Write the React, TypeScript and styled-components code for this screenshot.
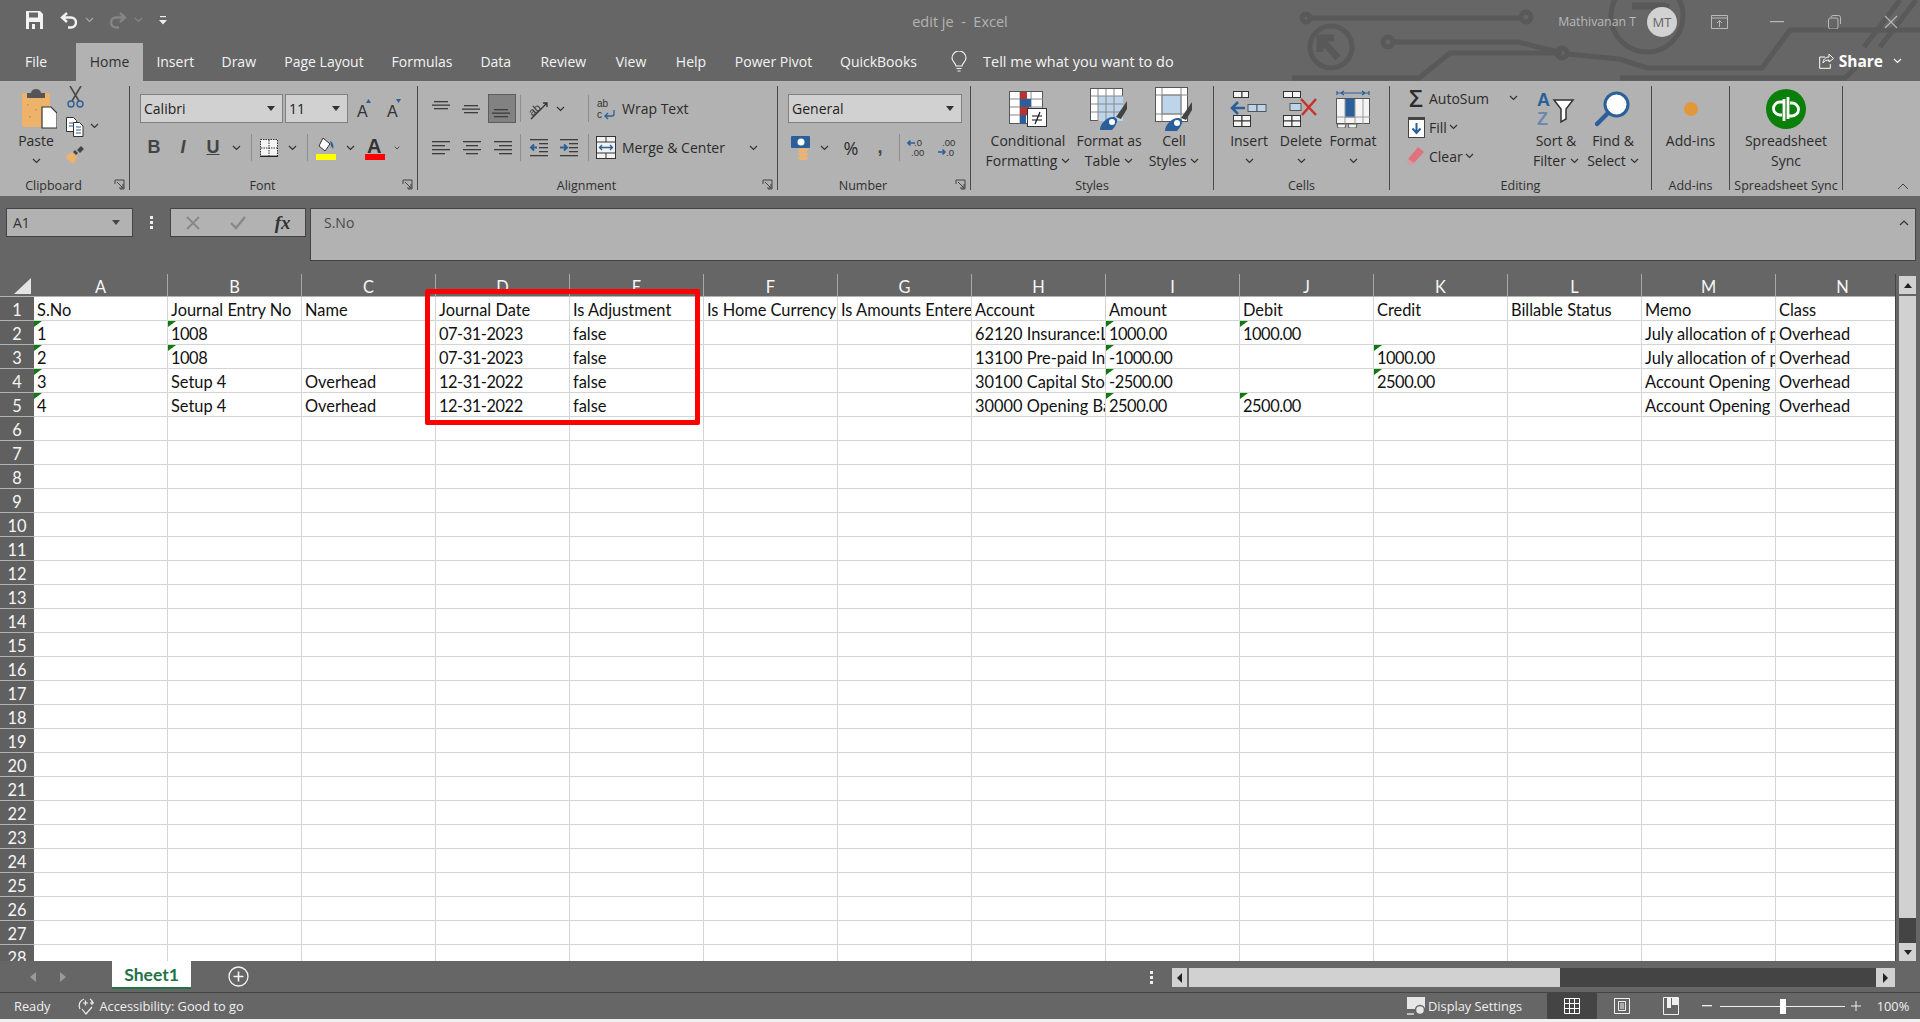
import React from "react";
import styled, { createGlobalStyle } from "styled-components";

const UI_FONT = `"Open Sans", "Noto Sans", sans-serif`;
const CELL_FONT = `Lato, "Open Sans", sans-serif`;
const BLUE = "#2b5f99";
const INK = "#2b2b2b";

const Global = createGlobalStyle`
	html, body { margin: 0; padding: 0; background: #666; }
	* { box-sizing: border-box; }
`;

const Window = styled.div`
	width: 1920px;
	height: 1022px;
	display: flex;
	flex-direction: column;
	background: #666;
	font-family: ${UI_FONT};
	overflow: hidden;
`;

const Header = styled.div`
	position: relative;
	height: 81px;
	flex: none;
`;

const Circuit = styled.svg`
	position: absolute;
	top: 0;
	right: 0;
`;

const TitleBar = styled.div`
	position: relative;
	height: 43px;
	display: grid;
	grid-template-columns: 1fr auto 1fr;
	align-items: center;
`;

const Qat = styled.div`
	display: flex;
	align-items: center;
	padding-left: 26px;
	padding-bottom: 3px;
`;

const QatItem = styled.div<{ $ml: number }>`
	display: flex;
	align-items: center;
	margin-left: ${(p) => p.$ml}px;
`;

const Title = styled.div`
	font-size: 14.5px;
	color: #b4b4b4;
	white-space: pre;
`;

const WindowRight = styled.div`
	display: flex;
	align-items: center;
	justify-content: flex-end;
	height: 100%;
`;

const UserName = styled.span`
	font-size: 12.3px;
	color: #b9b9b9;
	margin-right: 11px;
`;

const Avatar = styled.div`
	width: 30px;
	height: 30px;
	border-radius: 50%;
	background: #d2d2d2;
	color: #666;
	font-size: 13px;
	display: flex;
	align-items: center;
	justify-content: center;
	margin-right: 13px;
`;

const WinButton = styled.div<{ $w: number }>`
	width: ${(p) => p.$w}px;
	display: flex;
	justify-content: center;
`;

const TabBar = styled.div`
	position: relative;
	height: 38px;
	display: flex;
	align-items: stretch;
	padding-left: 4px;
`;

const Tab = styled.div<{ $w: number; $mr?: number; $active?: boolean }>`
	width: ${(p) => p.$w}px;
	margin-right: ${(p) => p.$mr ?? 0}px;
	display: flex;
	align-items: center;
	justify-content: center;
	padding-bottom: 2px;
	font-size: 14px;
	white-space: nowrap;
	color: ${(p) => (p.$active ? "#303030" : "#f4f4f4")};
	background: ${(p) => (p.$active ? "#b2b2b2" : "transparent")};
`;

const TellMe = styled.div`
	display: flex;
	align-items: center;
	gap: 16px;
	margin-left: 20px;
	padding-bottom: 2px;
	font-size: 14.5px;
	color: #f4f4f4;
`;

const Share = styled.div`
	position: absolute;
	right: 14px;
	top: 0;
	height: 100%;
	display: flex;
	align-items: center;
	gap: 5px;
	padding-bottom: 2px;
	font-size: 15.5px;
	font-weight: 700;
	color: #fff;
`;

const Ribbon = styled.div`
	position: relative;
	height: 115px;
	flex: none;
	background: #b2b2b2;
	display: flex;
	padding-top: 5px;
	color: ${INK};
`;

const Collapse = styled.svg`
	position: absolute;
	right: 11px;
	bottom: 6px;
`;

const GroupBox = styled.div<{ $w: number; $bare?: boolean }>`
	position: relative;
	width: ${(p) => p.$w}px;
	height: 104px;
	flex: none;
	display: flex;
	flex-direction: column;
	border-right: ${(p) => (p.$bare ? "none" : "1px solid #4a4a4a")};
`;

const GroupBody = styled.div<{ $pl?: number; $gap?: number; $center?: boolean }>`
	height: 90px;
	flex: none;
	display: flex;
	padding-left: ${(p) => p.$pl ?? 0}px;
	gap: ${(p) => p.$gap ?? 0}px;
	justify-content: ${(p) => (p.$center ? "center" : "flex-start")};
`;

const GroupLabel = styled.div<{ $launcher?: boolean }>`
	height: 18px;
	flex: none;
	margin-top: 1px;
	line-height: 18px;
	padding-right: ${(p) => (p.$launcher ? 22 : 0)}px;
	text-align: center;
	font-size: 12.5px;
	white-space: nowrap;
	color: #2f2f2f;
`;

const Launcher = styled.svg`
	position: absolute;
	right: 4px;
	bottom: 0;
`;

const Stack = styled.div`
	display: flex;
	flex-direction: column;
	gap: 10px;
	padding-top: 8px;
`;

const ToolRow = styled.div`
	display: flex;
	align-items: center;
	height: 29px;
`;

const Tool = styled.div<{ $w: number; $h?: number; $ml?: number; $on?: boolean }>`
	width: ${(p) => p.$w}px;
	height: ${(p) => p.$h ?? 29}px;
	margin-left: ${(p) => p.$ml ?? 0}px;
	flex: none;
	display: flex;
	align-items: center;
	justify-content: center;
	background: ${(p) => (p.$on ? "#828282" : "transparent")};
	border: ${(p) => (p.$on ? "1px solid #5c5c5c" : "none")};
`;

const Separator = styled.div<{ $ml: number }>`
	width: 1px;
	height: 27px;
	flex: none;
	margin-left: ${(p) => p.$ml}px;
	background: #8c8c8c;
`;

const Combo = styled.div<{ $w: number; $ml?: number }>`
	width: ${(p) => p.$w}px;
	height: 29px;
	flex: none;
	margin-left: ${(p) => p.$ml ?? 0}px;
	display: flex;
	align-items: center;
	justify-content: space-between;
	padding: 0 7px 0 3px;
	background: #d1d1d1;
	border: 1px solid #808080;
	font-size: 14px;
	color: #222;
`;

const ToolText = styled.span<{ $size?: number; $weight?: number }>`
	font-size: ${(p) => p.$size ?? 14}px;
	font-weight: ${(p) => p.$weight ?? 400};
	line-height: 20px;
	white-space: nowrap;
`;

const BoldLetter = styled.span`
	font-family: "Liberation Sans", sans-serif;
	font-weight: 700;
	font-size: 18px;
	color: #444;
`;

const ItalicLetter = styled(BoldLetter)`
	font-style: italic;
`;

const UnderLetter = styled(BoldLetter)`
	text-decoration: underline;
`;

const LargeBox = styled.div<{ $w: number }>`
	width: ${(p) => p.$w}px;
	flex: none;
	display: flex;
	flex-direction: column;
	align-items: center;
	font-size: 14px;
	line-height: 20px;
	white-space: nowrap;
`;

const LargeIcon = styled.div`
	height: 45px;
	display: flex;
	align-items: center;
	justify-content: center;
`;

const LargeLine = styled.div`
	display: flex;
	align-items: center;
	gap: 4px;
	height: 20px;
`;

const IconColumn = styled.div<{ $ml: number }>`
	display: flex;
	flex-direction: column;
	align-items: center;
	gap: 9px;
	margin-left: ${(p) => p.$ml}px;
`;

const EditColumn = styled.div`
	width: 125px;
	flex: none;
	display: flex;
	flex-direction: column;
	gap: 3px;
	margin-top: -1px;
`;

const EditRow = styled.div`
	height: 26px;
	display: flex;
	align-items: center;
	font-size: 14px;
`;

const EditIcon = styled.div`
	width: 26px;
	flex: none;
	display: flex;
	justify-content: center;
`;

const FormulaRow = styled.div`
	height: 78px;
	flex: none;
	display: flex;
	align-items: flex-start;
	padding: 12px 4px 0 6px;
`;

const NameBox = styled.div`
	width: 127px;
	height: 29px;
	display: flex;
	align-items: center;
	justify-content: space-between;
	padding: 0 12px 0 6px;
	background: #b2b2b2;
	border: 1px solid #444;
	font-size: 14px;
	color: #333;
`;

const Dots = styled.div`
	width: 37px;
	height: 29px;
	display: flex;
	align-items: center;
	justify-content: center;
`;

const FxBox = styled.div`
	width: 136px;
	height: 29px;
	display: grid;
	grid-template-columns: repeat(3, 1fr);
	justify-items: center;
	align-items: center;
	background: #b2b2b2;
	border: 1px solid #444;
`;

const FxText = styled.span`
	font-family: "Liberation Serif", serif;
	font-style: italic;
	font-weight: 700;
	font-size: 19px;
	color: #333;
`;

const FormulaBar = styled.div`
	position: relative;
	flex: 1;
	height: 53px;
	margin-left: 4px;
	padding: 4px 13px;
	background: #b2b2b2;
	border: 1px solid #444;
	font-size: 14px;
	color: #4a4a4a;
`;

const FormulaCaret = styled.svg`
	position: absolute;
	right: 6px;
	top: 11px;
`;

const GridArea = styled.div`
	position: relative;
	height: 687px;
	flex: none;
	display: flex;
`;

const Sheet = styled.div`
	width: 1896px;
	height: 687px;
	overflow: hidden;
	display: grid;
	grid-template-columns: 34px repeat(14, 134px);
	grid-template-rows: 23px;
	grid-auto-rows: 24px;
	background: #fff;
	border-right: 1px solid #444;
	font-family: ${CELL_FONT};
	font-size: 16.4px;
	align-content: start;
`;

const Corner = styled.div`
	background: #666;
	border-bottom: 1px solid #b2b2b2;
	display: flex;
	align-items: flex-end;
	justify-content: flex-end;
	padding: 0 3px 2px 0;
`;

const ColHead = styled.div`
	background: #666;
	color: #f6f6f6;
	border-right: 1px solid #a8a8a8;
	border-bottom: 1px solid #b2b2b2;
	display: flex;
	align-items: center;
	justify-content: center;
	padding-top: 2px;
`;

const RowHead = styled.div`
	background: #606060;
	color: #f6f6f6;
	border-bottom: 1px solid #b2b2b2;
	display: flex;
	align-items: center;
	justify-content: center;
	padding-top: 1px;
`;

const Cell = styled.div<{ $flag?: boolean; $num?: boolean }>`
	position: relative;
	border-right: 1px solid #d4d4d4;
	border-bottom: 1px solid #d4d4d4;
	padding: 1px 3px 0;
	line-height: 23px;
	letter-spacing: ${(p) => (p.$num ? "-0.45px" : "0")};
	white-space: nowrap;
	overflow: hidden;
	color: #111;

	&::before {
		content: "";
		display: ${(p) => (p.$flag ? "block" : "none")};
		position: absolute;
		left: 0;
		top: 0;
		border-top: 6px solid #0f7b0f;
		border-right: 8px solid transparent;
	}
`;

const Highlight = styled.div`
	position: absolute;
	left: 425px;
	top: 15px;
	width: 275px;
	height: 136px;
	border: 5px solid #f00;
	border-radius: 2px;
	pointer-events: none;
`;

const ScrollColumn = styled.div`
	width: 24px;
	display: flex;
	flex-direction: column;
	padding: 2px 4px 0 3px;
`;

const ScrollButton = styled.div`
	height: 18px;
	flex: none;
	background: #d1d1d1;
	display: flex;
	align-items: center;
	justify-content: center;
`;

const ScrollThumb = styled.div`
	height: 622px;
	flex: none;
	margin-top: 2px;
	background: #d1d1d1;
`;

const ScrollTrack = styled.div`
	flex: 1;
	background: #444;
`;

const SheetBar = styled.div`
	height: 32px;
	flex: none;
	display: flex;
	align-items: flex-start;
	border-bottom: 1px solid #444;
`;

const SheetNav = styled.div`
	width: 112px;
	height: 100%;
	display: flex;
	align-items: center;
	gap: 24px;
	padding: 0 0 0 30px;
`;

const SheetTab = styled.div`
	width: 79px;
	height: 28px;
	padding-top: 1px;
	background: #fff;
	border-bottom: 2px solid #217346;
	color: #217346;
	font-family: ${CELL_FONT};
	font-weight: 700;
	font-size: 17.5px;
	display: flex;
	align-items: center;
	justify-content: center;
`;

const AddSheet = styled.div`
	margin-left: 37px;
	height: 100%;
	display: flex;
	align-items: center;
`;

const HScroll = styled.div`
	margin-left: auto;
	margin-right: 25px;
	margin-top: 7px;
	height: 19px;
	display: flex;
	align-items: stretch;
`;

const HDots = styled.div`
	display: flex;
	align-items: center;
	margin-right: 19px;
`;

const HButton = styled.div<{ $w: number }>`
	width: ${(p) => p.$w}px;
	background: #d1d1d1;
	display: flex;
	align-items: center;
	justify-content: center;
`;

const HThumb = styled.div`
	width: 371px;
	margin-left: 2px;
	background: #d1d1d1;
`;

const HTrack = styled.div`
	width: 316px;
	background: #444;
`;

const StatusBar = styled.div`
	height: 26px;
	flex: none;
	display: flex;
	align-items: stretch;
	padding-left: 14px;
	font-size: 12.8px;
	color: #efefef;
`;

const StatusItem = styled.div<{ $ml?: number; $mr?: number }>`
	display: flex;
	align-items: center;
	gap: 2px;
	margin-left: ${(p) => p.$ml ?? 0}px;
	margin-right: ${(p) => p.$mr ?? 0}px;
`;

const StatusRight = styled.div`
	margin-left: auto;
	display: flex;
	align-items: stretch;
`;

const ViewButton = styled.div<{ $on?: boolean; $w: number }>`
	width: ${(p) => p.$w}px;
	display: flex;
	align-items: center;
	justify-content: center;
	background: ${(p) => (p.$on ? "#444" : "transparent")};
`;

const ZoomTrack = styled.div`
	position: relative;
	width: 125px;
	margin: 0 1px;
	align-self: center;
	height: 1px;
	background: #f0f0f0;

	&::after {
		content: "";
		position: absolute;
		left: 60px;
		top: -7px;
		width: 6px;
		height: 15px;
		background: #fff;
	}
`;

const ZoomPct = styled.div`
	width: 54px;
	display: flex;
	align-items: center;
	justify-content: center;
`;

const BottomStrip = styled.div`
	flex: 1;
	background: #f1f1f1;
`;

const Chevron = ({ color = "#333" }: { color?: string }) => (
	<svg width="9" height="6" viewBox="0 0 9 6">
		<polyline points="1,1 4.5,4.5 8,1" fill="none" stroke={color} strokeWidth="1.2" />
	</svg>
);

const Triangle = ({ color = "#333", up }: { color?: string; up?: boolean }) => (
	<svg width="8" height="5" viewBox="0 0 8 5">
		<polygon points={up ? "0,5 8,5 4,0" : "0,0 8,0 4,5"} fill={color} />
	</svg>
);

const LauncherIcon = () => (
	<Launcher width="11" height="11" viewBox="0 0 11 11">
		<path d="M1 5V1h9v9H6M3 3l6 6M9 5v4H5" fill="none" stroke="#444" strokeWidth="1" />
	</Launcher>
);

const TextLines = ({ rows }: { rows: [number, number][] }) => (
	<svg width="20" height="18" viewBox="0 0 20 18">
		{rows.map(([x, width], i) => (
			<rect key={i} x={x} y={2 + i * 4} width={width} height="1.3" fill="#3c3c3c" />
		))}
	</svg>
);

const VerticalAlign = ({ top }: { top: number }) => (
	<svg width="20" height="18" viewBox="0 0 20 18">
		{[0, 1, 2].map((i) => (
			<rect key={i} x={i === 1 ? 0 : 2} y={top + i * 3.5} width={i === 1 ? 18 : 14} height="1.3" fill="#3c3c3c" />
		))}
	</svg>
);

const SaveIcon = () => (
	<svg width="17" height="18" viewBox="0 0 17 18">
		<path d="M0 0h14l3 3v15H0z" fill="#f2f2f2" />
		<rect x="3" y="1.5" width="9" height="5" fill="#666" />
		<rect x="3" y="11" width="11" height="7" fill="#666" />
		<rect x="6" y="13" width="3" height="5" fill="#f2f2f2" />
	</svg>
);

const UndoIcon = ({ color, flip }: { color: string; flip?: boolean }) => (
	<svg width="19" height="17" viewBox="0 0 19 17">
		<path
			d="M7 1L2 5.5 7 10M2 5.5h9a5 5 0 0 1 0 10H8"
			transform={flip ? "matrix(-1 0 0 1 19 0)" : undefined}
			fill="none"
			stroke={color}
			strokeWidth="2.4"
		/>
	</svg>
);

const CustomizeIcon = () => (
	<svg width="8" height="9" viewBox="0 0 8 9">
		<rect x="1" y="0" width="6" height="1.2" fill="#eee" />
		<polygon points="0,4 8,4 4,8.5" fill="#eee" />
	</svg>
);

const CircuitArt = () => (
	<Circuit width="640" height="81" viewBox="0 0 640 81">
		<g fill="none" stroke="#595959" strokeWidth="5">
			<circle cx="26" cy="18" r="4" />
			<path d="M31 18H240" />
			<circle cx="246" cy="17" r="5" />
			<circle cx="51" cy="47" r="21" />
			<path d="M58 58L42 40M40 52V38h14" strokeWidth="7" />
			<circle cx="108" cy="42" r="5" />
			<path d="M113 42H238l44 11" />
			<circle cx="282" cy="53" r="5" />
			<path d="M12 78H139l31-25H277M287 54l52 5 28 9H482l28-38H640" />
			<circle cx="367" cy="16" r="36" />
			<path d="M352 6h34v-2M386 6l-14 24" strokeWidth="7" />
			<path d="M340 78H565l12-12M584 47L620 0M600 47L636 0" />
		</g>
	</Circuit>
);

const PasteIcon = () => (
	<svg width="42" height="40" viewBox="-7 0 42 40">
		<rect x="0" y="4" width="28" height="34" rx="2" fill="#eeb36a" />
		<path d="M9 4a5 4 0 0 1 10 0h4v5H5V4z" fill="#555" />
		<path d="M20 18h9l6 6v15H20z" fill="#fff" stroke="#333" strokeWidth="1.200" />
		<g fill="#c98d44">
			<rect x="5" y="15" width="1.500" height="1.500" />
			<rect x="13" y="20" width="1.500" height="1.500" />
			<rect x="7" y="27" width="1.500" height="1.500" />
		</g>
	</svg>
);

const CutIcon = () => (
	<svg width="17" height="22" viewBox="0 0 17 22">
		<path d="M3 0l9 15M14 0L5 15" stroke="#4a4a4a" strokeWidth="1.6" fill="none" />
		<circle cx="4" cy="18" r="3" fill="none" stroke={BLUE} strokeWidth="1.4" />
		<circle cx="13" cy="18" r="3" fill="none" stroke={BLUE} strokeWidth="1.4" />
	</svg>
);

const CopyIcon = () => (
	<svg width="18" height="20" viewBox="0 0 18 20">
		<path d="M.5.5h7l3 3v11H.5z" fill="#fff" stroke="#333" />
		<path d="M7.5 5.5h6l3.5 3.5v10.500H7.500z" fill="#fff" stroke="#333" />
		<path d="M3 6h5M3 9h4M10 10h5M10 13h5M10 16h5" stroke={BLUE} strokeWidth="1.200" />
	</svg>
);

const PainterIcon = () => (
	<svg width="18" height="18" viewBox="0 0 18 18">
		<path d="M0 10l6-4 5 5-3 7-4-2-1-3-2 1z" fill="#eeb36a" />
		<path d="M7 6l2-2 3 3-2 2zM11 4l4-4 3 3-4 4z" fill="#444" />
	</svg>
);

const GrowIcon = ({ up }: { up: boolean }) => (
	<svg width="18" height="20" viewBox="0 0 18 20">
		<text x="1" y="18" fontFamily="Liberation Sans" fontSize="16" fill="#333">A</text>
		<polygon points={up ? "10,4 15,4 12.500,0" : "10,0 15,0 12.500,4"} fill={BLUE} />
	</svg>
);

const BordersIcon = () => (
	<svg width="18" height="18" viewBox="0 0 18 18">
		<rect x=".5" y=".5" width="17" height="17" fill="#f4f4f4" stroke="#333" strokeDasharray="1.500 1" />
		<path d="M9 1v16M1 9h16" stroke="#333" strokeDasharray="1.500 1" />
		<path d="M0 17.300h18" stroke="#222" strokeWidth="1.400" />
	</svg>
);

const FillIcon = () => (
	<svg width="21" height="24" viewBox="0 0 21 24">
		<path d="M7 2l7 6-5 7-6-5z" fill="#fff" stroke="#333" />
		<path d="M14 5c3 1 4 5 3 8l-2-3z" fill={BLUE} />
		<rect x="0" y="18" width="20" height="6" fill="#ffff00" />
	</svg>
);

const FontColorIcon = () => (
	<svg width="21" height="24" viewBox="0 0 21 24">
		<text x="2" y="17" fontFamily="Liberation Sans" fontWeight="700" fontSize="20" fill="#333">A</text>
		<rect x="0" y="18" width="20" height="6" fill="#f00" />
	</svg>
);

const OrientIcon = () => (
	<svg width="22" height="22" viewBox="0 0 22 22">
		<text x="1" y="15" fontFamily="Liberation Sans" fontSize="11" fill="#333" transform="rotate(-40 8 11)">ab</text>
		<path d="M4 21L20 5M16 5h4v4" fill="none" stroke="#333" strokeWidth="1.300" />
	</svg>
);

const WrapIcon = () => (
	<svg width="20" height="22" viewBox="0 0 20 22">
		<text x="1" y="9" fontFamily="Liberation Sans" fontSize="10" fill="#333">ab</text>
		<text x="1" y="20" fontFamily="Liberation Sans" fontSize="10" fill="#333">c</text>
		<path d="M18 12v4a2 2 0 0 1-2 2H9M12 15l-3 3 3 3" fill="none" stroke={BLUE} strokeWidth="1.300" />
	</svg>
);

const MergeIcon = () => (
	<svg width="20" height="23" viewBox="0 0 20 23">
		<rect x=".5" y=".5" width="19" height="22" fill="#f2f2f2" stroke="#333" />
		<path d="M1 6h18M1 17h18M10 1v5M10 17v5" stroke="#333" />
		<path d="M4 11.500h12M6 9l-2.500 2.500L6 14M14 9l2.500 2.500L14 14" fill="none" stroke={BLUE} strokeWidth="1.300" />
	</svg>
);

const IndentIcon = ({ right }: { right: boolean }) => (
	<svg width="20" height="20" viewBox="0 0 20 20">
		{[1, 5, 9, 13, 17].map((y, i) => (
			<rect key={y} x={i === 0 || i === 4 ? 1 : 10} y={y} width={i === 0 || i === 4 ? 18 : 9} height="1.300" fill="#3c3c3c" />
		))}
		<path d={right ? "M1 9.500h6M5 6.500l3 3-3 3" : "M8 9.500H2M5 6.500l-3 3 3 3"} fill="none" stroke={BLUE} strokeWidth="2" />
	</svg>
);

const AccountingIcon = () => (
	<svg width="20" height="24" viewBox="0 0 20 24">
		<rect x="0" y="0" width="19" height="12" rx="1" fill={BLUE} />
		<circle cx="10" cy="6" r="3.500" fill="#fff" />
		<ellipse cx="12" cy="14" rx="5" ry="2" fill="#e9b474" />
		<ellipse cx="12" cy="18" rx="5" ry="2" fill="#e9b474" />
		<ellipse cx="12" cy="22" rx="5" ry="2" fill="#e9b474" />
	</svg>
);

const DecimalIcon = ({ more }: { more: boolean }) => (
	<svg width="20" height="20" viewBox="0 0 20 20" fontFamily="Liberation Sans" fontSize="9.500" fill="#333">
		<text x={more ? 7 : 4} y="8">{more ? ".0" : ".00"}</text>
		<text x={more ? 4 : 8} y="18">{more ? ".00" : ".0"}</text>
		<path d={more ? "M8 5H1M3.500 2.500L1 5l2.500 2.500" : "M0 14h7M4.500 11.500L7 14l-2.500 2.500"} fill="none" stroke={BLUE} strokeWidth="1.600" />
	</svg>
);

const CondFormatIcon = () => (
	<svg width="38" height="36" viewBox="0 0 38 36">
		<rect x=".5" y=".5" width="33" height="32" fill="#fff" stroke="#555" />
		<path d="M11 1v32M22 1v32M1 8h33M1 16h33M1 24h33" stroke="#888" />
		<rect x="11" y="1" width="7" height="7" fill="#b8352f" />
		<rect x="11" y="8" width="11" height="8" fill={BLUE} />
		<rect x="11" y="16" width="9" height="8" fill="#b8352f" />
		<rect x="11" y="24" width="6" height="9" fill={BLUE} />
		<rect x="18.500" y="17.500" width="19" height="18" fill="#fff" stroke="#333" />
		<path d="M23 25h10M23 29h10M31 21l-5 12" stroke="#111" strokeWidth="1.200" />
	</svg>
);

const TableStyleIcon = () => (
	<svg width="38" height="42" viewBox="0 0 38 42">
		<rect x=".5" y=".5" width="32" height="32" fill="#fff" stroke="#555" />
		<rect x="8" y="8" width="25" height="25" fill="#bcd5ea" />
		<path d="M8 1v32M16 1v32M24 1v32M1 8h32M1 16h32M1 24h32" stroke="#888" />
		<path d="M26 29L37 13v8l-6 10z" fill="#444" />
		<path d="M10 42c0-6 6-12 12-13 4 0 6 2 5 5-1 2-2 5-5 8z" fill={BLUE} />
		<circle cx="22" cy="34" r="3" fill="#fff" />
	</svg>
);

const CellStyleIcon = () => (
	<svg width="38" height="44" viewBox="0 0 38 44">
		<rect x=".5" y=".5" width="32" height="34" fill="#fff" stroke="#555" />
		<rect x="7" y="8" width="19" height="19" fill="#bcd5ea" stroke="#888" />
		<path d="M7 1v33M26 1v33M1 8h32M1 27h32" stroke="#888" />
		<path d="M26 31L37 15v8l-6 10z" fill="#444" />
		<path d="M10 44c0-6 6-12 12-13 4 0 6 2 5 5-1 2-2 5-5 8z" fill={BLUE} />
		<circle cx="22" cy="36" r="3" fill="#fff" />
	</svg>
);

const CellBlock = ({ x, y }: { x: number; y: number }) => (
	<g fill="#f4f4f4" stroke="#333">
		<rect x={x} y={y} width="8.500" height="5.500" />
		<rect x={x + 8.500} y={y} width="8.500" height="5.500" />
		<rect x={x} y={y + 5.500} width="8.500" height="5.500" />
		<rect x={x + 8.500} y={y + 5.500} width="8.500" height="5.500" />
	</g>
);

const InsertCellsIcon = () => (
	<svg width="38" height="36" viewBox="0 0 38 36">
		<rect x="3.500" y=".5" width="8.500" height="6" fill="#f4f4f4" stroke="#333" />
		<rect x="12" y=".5" width="6.500" height="6" fill="#f4f4f4" stroke="#333" />
		<rect x="18" y="13.500" width="9" height="7" fill="#bcd5ea" stroke="#555" />
		<rect x="27" y="13.500" width="9" height="7" fill="#bcd5ea" stroke="#555" />
		<path d="M15 17H3M8 11l-6 6 6 6" fill="none" stroke={BLUE} strokeWidth="2.500" />
		<CellBlock x={3.500} y={24.500} />
	</svg>
);

const DeleteCellsIcon = () => (
	<svg width="36" height="36" viewBox="0 0 36 36">
		<rect x=".5" y=".5" width="9" height="6" fill="#f4f4f4" stroke="#333" />
		<rect x="9.500" y=".5" width="8" height="6" fill="#f4f4f4" stroke="#333" />
		<rect x="7" y="12.500" width="11" height="7" fill="#bcd5ea" stroke="#555" />
		<CellBlock x={.5} y={24.500} />
		<path d="M18 8l15 16M33 8L19 24" stroke="#c8322a" strokeWidth="2.500" />
	</svg>
);

const FormatCellsIcon = () => (
	<svg width="34" height="38" viewBox="0 0 34 38">
		<path d="M1 3h32M1 1v4M33 1v4M5 3l3-2M5 3l3 2M29 3l-3-2M29 3l-3 2" fill="none" stroke={BLUE} strokeWidth="1.200" />
		<rect x=".5" y="8.500" width="33" height="25" fill="#f4f4f4" stroke="#555" />
		<rect x="9" y="8.500" width="10" height="19" fill={BLUE} />
		<path d="M9 9v25M19 9v25M27 9v25M1 27h33" stroke="#999" />
		<path d="M1 34h9l-1 4H2zM12 34h9l-1 4h-7z" fill="#f4f4f4" stroke="#555" />
	</svg>
);

const FillDownIcon = () => (
	<svg width="17" height="21" viewBox="0 0 17 21">
		<rect x=".5" y=".5" width="16" height="20" fill="#fff" stroke="#444" />
		<rect x="0" y="0" width="17" height="3" fill="#444" />
		<path d="M8.500 6v10M4.500 11.500l4 4.500 4-4.500" fill="none" stroke={BLUE} strokeWidth="2" />
	</svg>
);

const EraserIcon = () => (
	<svg width="18" height="18" viewBox="0 0 18 18">
		<path d="M11 0l6 5L7 16 1 12z" fill="#e0727f" />
		<path d="M1 12l6 4-1.500 2H2l-2-3z" fill="#d79aa2" />
	</svg>
);

const SortFilterIcon = () => (
	<svg width="38" height="36" viewBox="0 0 38 36" fontFamily="Liberation Sans" fontWeight="700" fontSize="18" fill={BLUE}>
		<text x="0" y="15">A</text>
		<text x="0" y="34" fill="#6d87ad">Z</text>
		<path d="M17 9h19l-7 9v10l-5 3V18z" fill="#fff" stroke="#333" strokeWidth="1.500" />
	</svg>
);

const FindIcon = () => (
	<svg width="36" height="36" viewBox="0 0 36 36">
		<circle cx="21.500" cy="13.500" r="11.500" fill="#fff" stroke={BLUE} strokeWidth="3" />
		<path d="M13 22L2 33" stroke={BLUE} strokeWidth="4.500" strokeLinecap="round" />
	</svg>
);

const QuickBooksLogo = () => (
	<svg width="40" height="40" viewBox="0 0 40 40">
		<circle cx="20" cy="20" r="20" fill="#0a7f0a" />
		<path d="M18 13h-4a6.500 6.500 0 0 0 0 13h2M18 10v22M22 27h4a6.500 6.500 0 0 0 0-13h-2M22 30V8" fill="none" stroke="#fff" strokeWidth="2.800" />
	</svg>
);

const Large = ({ w, icon, lines, chevron }: { w: number; icon: React.ReactNode; lines: string[]; chevron?: "below" | "inline" }) => (
	<LargeBox $w={w}>
		<LargeIcon>{icon}</LargeIcon>
		{lines.map((line, i) => (
			<LargeLine key={i}>
				{line}
				{chevron === "inline" && i === lines.length - 1 && <Chevron />}
			</LargeLine>
		))}
		{chevron === "below" && (
			<LargeLine>
				<Chevron />
			</LargeLine>
		)}
	</LargeBox>
);

const Group = ({ w, label, launcher, bare, children, pl, gap, center }: {
	w: number;
	label: string;
	launcher?: boolean;
	bare?: boolean;
	children: React.ReactNode;
	pl?: number;
	gap?: number;
	center?: boolean;
}) => (
	<GroupBox $w={w} $bare={bare}>
		<GroupBody $pl={pl} $gap={gap} $center={center}>
			{children}
		</GroupBody>
		<GroupLabel $launcher={launcher}>{label}</GroupLabel>
		{launcher && <LauncherIcon />}
	</GroupBox>
);

const COLUMNS = "ABCDEFGHIJKLMN".split("");

// text plus the "number stored as text" flag for each cell that has one
type Entry = string | [string];
const ROWS: Record<number, Partial<Record<string, Entry>>> = {
	1: { A: "S.No", B: "Journal Entry No", C: "Name", D: "Journal Date", E: "Is Adjustment", F: "Is Home Currency", G: "Is Amounts Entere", H: "Account", I: "Amount", J: "Debit", K: "Credit", L: "Billable Status", M: "Memo", N: "Class" },
	2: { A: ["1"], B: ["1008"], D: "07-31-2023", E: "false", H: "62120 Insurance:L", I: ["1000.00"], J: ["1000.00"], M: "July allocation of p", N: "Overhead" },
	3: { A: ["2"], B: ["1008"], D: "07-31-2023", E: "false", H: "13100 Pre-paid Ins", I: ["-1000.00"], K: ["1000.00"], M: "July allocation of p", N: "Overhead" },
	4: { A: ["3"], B: "Setup 4", C: "Overhead", D: "12-31-2022", E: "false", H: "30100 Capital Stoc", I: ["-2500.00"], K: ["2500.00"], M: "Account Opening B", N: "Overhead" },
	5: { A: ["4"], B: "Setup 4", C: "Overhead", D: "12-31-2022", E: "false", H: "30000 Opening Ba", I: ["2500.00"], J: ["2500.00"], M: "Account Opening B", N: "Overhead" },
};

const renderRow = (row: number) => (
	<React.Fragment key={row}>
		<RowHead>{row}</RowHead>
		{COLUMNS.map((col) => {
			const entry = ROWS[row]?.[col];
			const flagged = Array.isArray(entry);
			const text = flagged ? (entry as [string])[0] : (entry as string);
			return (
				<Cell key={col} $flag={flagged} $num={/^[-\d.]+$/.test(text ?? "")}>
					{text}
				</Cell>
			);
		})}
	</React.Fragment>
);

const App = () => (
	<Window>
		<Global />
		<Header>
			<CircuitArt />
			<TitleBar>
				<Qat>
					<SaveIcon />
					<QatItem $ml={17}><UndoIcon color="#f2f2f2" /></QatItem>
					<QatItem $ml={6}><Chevron color="#aaa" /></QatItem>
					<QatItem $ml={14}><UndoIcon color="#858585" flip /></QatItem>
					<QatItem $ml={7}><Chevron color="#888" /></QatItem>
					<QatItem $ml={16}><CustomizeIcon /></QatItem>
				</Qat>
				<Title>edit je  -  Excel</Title>
				<WindowRight>
					<UserName>Mathivanan T</UserName>
					<Avatar>MT</Avatar>
					<WinButton $w={58}>
						<svg width="17" height="14" viewBox="0 0 17 14">
							<path d="M.5.5h16v13H.5zM1 3h15M8.500 12V6M6 8l2.500-2.500L11 8" fill="none" stroke="#b9b9b9" />
						</svg>
					</WinButton>
					<WinButton $w={58}>
						<svg width="14" height="2" viewBox="0 0 14 2"><rect width="14" height="1.200" fill="#b9b9b9" /></svg>
					</WinButton>
					<WinButton $w={56}>
						<svg width="13" height="14" viewBox="0 0 13 14">
							<path d="M3 2.500a2 2 0 0 1 2-2h5.500a2 2 0 0 1 2 2V9M.5 5a2 2 0 0 1 2-2H8a2 2 0 0 1 2 2v7a2 2 0 0 1-2 2H2.500a2 2 0 0 1-2-2z" fill="none" stroke="#b9b9b9" />
						</svg>
					</WinButton>
					<WinButton $w={58}>
						<svg width="14" height="14" viewBox="0 0 14 14">
							<path d="M1 1l12 12M13 1L1 13" stroke="#b9b9b9" strokeWidth="1.100" />
						</svg>
					</WinButton>
				</WindowRight>
			</TitleBar>
			<TabBar>
				<Tab $w={64} $mr={8}>File</Tab>
				<Tab $w={67} $active>Home</Tab>
				<Tab $w={64.5}>Insert</Tab>
				<Tab $w={62.5}>Draw</Tab>
				<Tab $w={108}>Page Layout</Tab>
				<Tab $w={88}>Formulas</Tab>
				<Tab $w={59.5}>Data</Tab>
				<Tab $w={75.5}>Review</Tab>
				<Tab $w={60}>View</Tab>
				<Tab $w={60}>Help</Tab>
				<Tab $w={105}>Power Pivot</Tab>
				<Tab $w={105}>QuickBooks</Tab>
				<TellMe>
					<svg width="16" height="21" viewBox="0 0 16 21">
						<path d="M5 15c0-3-4-4-4-8a7 7 0 0 1 14 0c0 4-4 5-4 8zM5.500 17.500h5M6.500 20h3" fill="none" stroke="#f2f2f2" strokeWidth="1.200" />
					</svg>
					Tell me what you want to do
				</TellMe>
				<Share>
					<svg width="15" height="16" viewBox="0 0 15 16">
						<path d="M6 4H.7v11.300h10.600V11M4 10c0-4 3-6 6-6V1l4.500 4.500L10 9V7c-3 0-5 1-6 3z" fill="none" stroke="#fff" />
					</svg>
					Share
					<WinButton $w={18}><Chevron color="#fff" /></WinButton>
				</Share>
			</TabBar>
		</Header>

		<Ribbon>
			<Group w={130} label="Clipboard" launcher pl={11}>
				<Large w={50} icon={<PasteIcon />} lines={["Paste"]} chevron="below" />
				<IconColumn $ml={5}>
					<CutIcon />
					<CopyIcon />
					<PainterIcon />
				</IconColumn>
				<Tool $w={20} $h={80}><Chevron /></Tool>
			</Group>

			<Group w={288} label="Font" launcher pl={10}>
				<Stack>
					<ToolRow>
						<Combo $w={143}>Calibri<Triangle /></Combo>
						<Combo $w={63} $ml={2}>11<Triangle /></Combo>
						<Tool $w={32} $ml={1}><GrowIcon up /></Tool>
						<Tool $w={28}><GrowIcon up={false} /></Tool>
					</ToolRow>
					<ToolRow>
						<Tool $w={28}><BoldLetter>B</BoldLetter></Tool>
						<Tool $w={30}><ItalicLetter>I</ItalicLetter></Tool>
						<Tool $w={30}><UnderLetter>U</UnderLetter></Tool>
						<Tool $w={16}><Chevron /></Tool>
						<Separator $ml={7} />
						<Tool $w={34}><BordersIcon /></Tool>
						<Tool $w={12}><Chevron /></Tool>
						<Separator $ml={9} />
						<Tool $w={36}><FillIcon /></Tool>
						<Tool $w={12}><Chevron /></Tool>
						<Tool $w={38}><FontColorIcon /></Tool>
						<Tool $w={6}><Chevron /></Tool>
					</ToolRow>
				</Stack>
			</Group>

			<Group w={360} label="Alignment" launcher pl={9}>
				<Stack>
					<ToolRow>
						<Tool $w={30}><VerticalAlign top={1} /></Tool>
						<Tool $w={30}><VerticalAlign top={5} /></Tool>
						<Tool $w={28} $on $ml={1}><VerticalAlign top={9} /></Tool>
						<Separator $ml={4} />
						<Tool $w={34}><OrientIcon /></Tool>
						<Tool $w={10}><Chevron /></Tool>
						<Separator $ml={23} />
						<Tool $w={33}><WrapIcon /></Tool>
						<ToolText>Wrap Text</ToolText>
					</ToolRow>
					<ToolRow>
						<Tool $w={30}><TextLines rows={[[0, 18], [0, 13], [0, 18], [0, 13]]} /></Tool>
						<Tool $w={30}><TextLines rows={[[1, 18], [4, 12], [1, 18], [4, 12]]} /></Tool>
						<Tool $w={30}><TextLines rows={[[2, 18], [7, 13], [2, 18], [7, 13]]} /></Tool>
						<Separator $ml={3} />
						<Tool $w={36}><IndentIcon right={false} /></Tool>
						<Tool $w={24}><IndentIcon right /></Tool>
						<Separator $ml={7} />
						<Tool $w={33}><MergeIcon /></Tool>
						<ToolText>Merge &amp; Center</ToolText>
						<Tool $w={10} $ml={24}><Chevron /></Tool>
					</ToolRow>
				</Stack>
			</Group>

			<Group w={193} label="Number" launcher pl={10}>
				<Stack>
					<ToolRow>
						<Combo $w={174}>General<Triangle /></Combo>
					</ToolRow>
					<ToolRow>
						<Tool $w={26}><AccountingIcon /></Tool>
						<Tool $w={20}><Chevron /></Tool>
						<Tool $w={34}><ToolText $size={18}>%</ToolText></Tool>
						<Tool $w={24}><BoldLetter>,</BoldLetter></Tool>
						<Separator $ml={7} />
						<Tool $w={34}><DecimalIcon more /></Tool>
						<Tool $w={28}><DecimalIcon more={false} /></Tool>
					</ToolRow>
				</Stack>
			</Group>

			<Group w={243} label="Styles" pl={14}>
				<Large w={86} icon={<CondFormatIcon />} lines={["Conditional", "Formatting"]} chevron="inline" />
				<Large w={76} icon={<TableStyleIcon />} lines={["Format as", "Table"]} chevron="inline" />
				<Large w={54} icon={<CellStyleIcon />} lines={["Cell", "Styles"]} chevron="inline" />
			</Group>

			<Group w={176} label="Cells" pl={14} gap={9}>
				<Large w={42} icon={<InsertCellsIcon />} lines={["Insert"]} chevron="below" />
				<Large w={44} icon={<DeleteCellsIcon />} lines={["Delete"]} chevron="below" />
				<Large w={42} icon={<FormatCellsIcon />} lines={["Format"]} chevron="below" />
			</Group>

			<Group w={262} label="Editing" pl={13}>
				<EditColumn>
					<EditRow>
						<EditIcon><ToolText $size={24} $weight={600}>Σ</ToolText></EditIcon>
						<span>AutoSum</span>
						<Tool $w={10} $h={20} $ml={19}><Chevron /></Tool>
					</EditRow>
					<EditRow>
						<EditIcon><FillDownIcon /></EditIcon>
						<span>Fill</span>
						<Tool $w={14} $h={20}><Chevron /></Tool>
					</EditRow>
					<EditRow>
						<EditIcon><EraserIcon /></EditIcon>
						<span>Clear</span>
						<Tool $w={14} $h={20}><Chevron /></Tool>
					</EditRow>
				</EditColumn>
				<Large w={56} icon={<SortFilterIcon />} lines={["Sort &", "Filter"]} chevron="inline" />
				<Large w={58} icon={<FindIcon />} lines={["Find &", "Select"]} chevron="inline" />
			</Group>

			<Group w={78} label="Add-ins" center>
				<Large w={70} icon={<svg width="14" height="14"><circle cx="7" cy="7" r="7" fill="#e2973b" /></svg>} lines={["Add-ins"]} />
			</Group>

			<Group w={113} label="Spreadsheet Sync" center>
				<Large w={100} icon={<QuickBooksLogo />} lines={["Spreadsheet", "Sync"]} />
			</Group>

			<Collapse width="12" height="7" viewBox="0 0 12 7">
				<polyline points="1,6 6,1 11,6" fill="none" stroke="#444" />
			</Collapse>
		</Ribbon>

		<FormulaRow>
			<NameBox>A1<Triangle color="#444" /></NameBox>
			<Dots>
				<svg width="3" height="13" viewBox="0 0 3 13" fill="#eee">
					<rect width="3" height="3" />
					<rect y="5" width="3" height="3" />
					<rect y="10" width="3" height="3" />
				</svg>
			</Dots>
			<FxBox>
				<svg width="14" height="14" viewBox="0 0 14 14"><path d="M1 1l12 12M13 1L1 13" stroke="#888" strokeWidth="1.800" /></svg>
				<svg width="16" height="14" viewBox="0 0 16 14"><path d="M1 7l5 5L15 1" fill="none" stroke="#888" strokeWidth="2.400" /></svg>
				<FxText>fx</FxText>
			</FxBox>
			<FormulaBar>
				S.No
				<FormulaCaret width="10" height="6" viewBox="0 0 10 6">
					<polyline points="1,5 5,1 9,5" fill="none" stroke="#333" strokeWidth="1.200" />
				</FormulaCaret>
			</FormulaBar>
		</FormulaRow>

		<GridArea>
			<Sheet>
				<Corner>
					<svg width="17" height="16" viewBox="0 0 17 16"><polygon points="17,0 17,16 0,16" fill="#e4e4e4" /></svg>
				</Corner>
				{COLUMNS.map((col) => (
					<ColHead key={col}>{col}</ColHead>
				))}
				{Array.from({ length: 28 }, (_, i) => renderRow(i + 1))}
			</Sheet>
			<Highlight />
			<ScrollColumn>
				<ScrollButton><Triangle color="#222" up /></ScrollButton>
				<ScrollThumb />
				<ScrollTrack />
				<ScrollButton><Triangle color="#222" /></ScrollButton>
			</ScrollColumn>
		</GridArea>

		<SheetBar>
			<SheetNav>
				<svg width="6" height="10" viewBox="0 0 6 10"><polygon points="6,0 6,10 0,5" fill="#9a9a9a" /></svg>
				<svg width="6" height="10" viewBox="0 0 6 10"><polygon points="0,0 0,10 6,5" fill="#9a9a9a" /></svg>
			</SheetNav>
			<SheetTab>Sheet1</SheetTab>
			<AddSheet>
				<svg width="21" height="21" viewBox="0 0 21 21">
					<circle cx="10.500" cy="10.500" r="9.500" fill="none" stroke="#f4f4f4" strokeWidth="1.300" />
					<path d="M10.500 5.500v10M5.500 10.500h10" stroke="#f4f4f4" strokeWidth="1.600" />
				</svg>
			</AddSheet>
			<HScroll>
				<HDots>
					<svg width="3" height="13" viewBox="0 0 3 13" fill="#eee">
						<rect width="3" height="3" />
						<rect y="5" width="3" height="3" />
						<rect y="10" width="3" height="3" />
					</svg>
				</HDots>
				<HButton $w={15}>
					<svg width="5" height="10" viewBox="0 0 5 10"><polygon points="5,0 5,10 0,5" fill="#222" /></svg>
				</HButton>
				<HThumb />
				<HTrack />
				<HButton $w={19}>
					<svg width="5" height="10" viewBox="0 0 5 10"><polygon points="0,0 0,10 5,5" fill="#222" /></svg>
				</HButton>
			</HScroll>
		</SheetBar>

		<StatusBar>
			<StatusItem>Ready</StatusItem>
			<StatusItem $ml={27}>
				<svg width="20" height="20" viewBox="0 0 20 20">
					<path d="M3 13A7 7 0 0 1 7 3M13 3a7 7 0 0 1 3 4M6 7h5M8.500 4.500v5M13 7h4M15 5v4M5 13l4 5 6-7" fill="none" stroke="#efefef" strokeWidth="1.200" />
				</svg>
				Accessibility: Good to go
			</StatusItem>
			<StatusRight>
				<StatusItem $mr={25}>
					<svg width="20" height="20" viewBox="0 0 20 20">
						<rect x="1" y="1" width="18" height="12" fill="#e6e6e6" />
						<circle cx="14" cy="14" r="4.500" fill="#e6e6e6" stroke="#666" strokeWidth="1.500" />
						<path d="M1 18h7" stroke="#e6e6e6" strokeWidth="1.400" />
					</svg>
					Display Settings
				</StatusItem>
				<ViewButton $w={50} $on>
					<svg width="16" height="16" viewBox="0 0 16 16">
						<path d="M.5.500h15v15H.500zM5.500 1v14M10.500 1v14M1 5.500h14M1 10.500h14" fill="none" stroke="#fff" />
					</svg>
				</ViewButton>
				<ViewButton $w={50}>
					<svg width="16" height="16" viewBox="0 0 16 16">
						<path d="M.5.500h15v15H.500zM4.500 3.500h7v9h-7zM6 6h4M6 8h4M6 10h4" fill="none" stroke="#f0f0f0" />
					</svg>
				</ViewButton>
				<ViewButton $w={48}>
					<svg width="16" height="18" viewBox="0 0 16 18">
						<path d="M.5.500h15v17H.500z" fill="none" stroke="#f0f0f0" />
						<path d="M4 1h4v10H4zM9 1h6v7H9z" fill="#f0f0f0" />
					</svg>
				</ViewButton>
				<ViewButton $w={24}>
					<svg width="10" height="2" viewBox="0 0 10 2"><rect width="10" height="1.300" fill="#f0f0f0" /></svg>
				</ViewButton>
				<ZoomTrack />
				<ViewButton $w={20}>
					<svg width="10" height="10" viewBox="0 0 10 10"><path d="M0 5h10M5 0v10" stroke="#f0f0f0" /></svg>
				</ViewButton>
				<ZoomPct>100%</ZoomPct>
			</StatusRight>
		</StatusBar>
		<BottomStrip />
	</Window>
);

export default App;
